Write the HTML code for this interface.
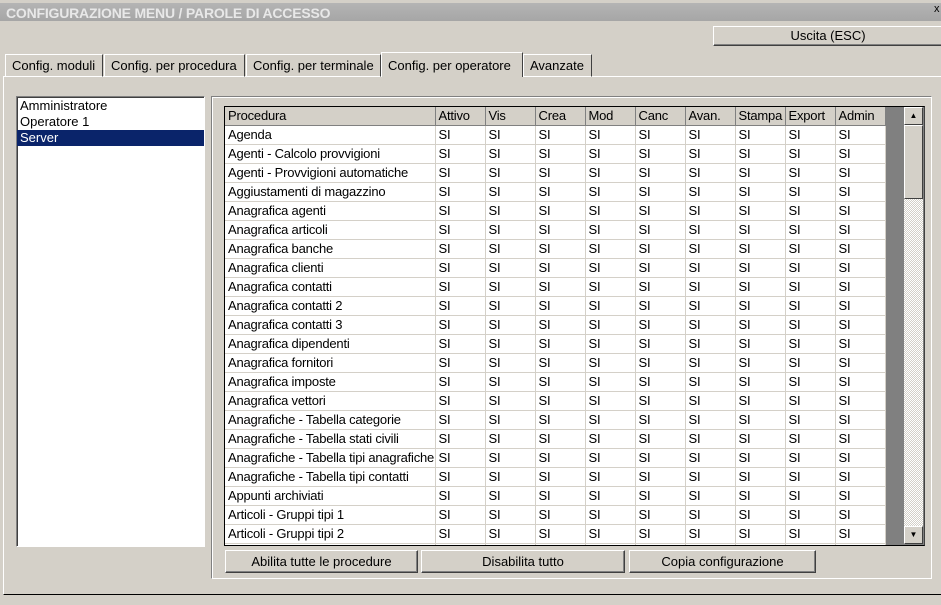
<!DOCTYPE html>
<html><head><meta charset="utf-8"><style>
*{box-sizing:border-box;margin:0;padding:0}
body{width:941px;height:605px;background:#d4d0c8;font-family:"Liberation Sans",Arial,sans-serif;font-size:13px;color:#000;position:relative;overflow:hidden}
.abs{position:absolute}
.title{left:0;top:0;width:941px;height:21px;background:linear-gradient(#b4b4b4,#a6a6a6);border-top:3px solid #d4d0c8;color:#e8e8e8;font-weight:bold;font-size:14px;padding:2px 0 0 6px;letter-spacing:-0.2px}
.btn{background:#d4d0c8;border:1px solid;border-color:#fff #404040 #404040 #fff;box-shadow:inset -1px -1px 0 #808080;text-align:center;line-height:18px}
.tab{top:54px;height:23px;border:1px solid;border-color:#fff #404040 transparent #fff;padding:3px 0 0 6px;white-space:nowrap}
.panel{left:3px;top:76px;width:945px;height:519px;border:1px solid;border-color:#fff #404040 #000 #fff}
.list{left:16px;top:96px;width:189px;height:451px;background:#fff;border:1px solid;border-color:#808080 #fff #fff #808080;box-shadow:inset 1px 1px 0 #404040}
.list div{height:16px;line-height:16px;padding-left:3px}
.frame{left:211px;top:96px;width:721px;height:483px;border:1px solid;border-color:#808080 #fff #fff #808080;box-shadow:inset 1px 1px 0 #fff,1px 1px 0 #808080 inset}
.grid{left:224px;top:106px;width:701px;height:440px;border:1px solid #000;border-right-color:#404040;background:#808080;overflow:hidden}
table{border-collapse:collapse;table-layout:fixed;background:#fff;width:660px}
td{height:19px;border-right:1px solid #d4d0c8;border-bottom:1px solid #d4d0c8;padding:0 0 0 3px;white-space:nowrap;overflow:hidden;text-overflow:clip;line-height:18px;letter-spacing:-0.2px}
tr.h td{background:#d4d0c8;border-right:1px solid #808080;border-bottom:1px solid #808080;height:18px}
.sb{left:904px;top:107px;width:19px;height:437px;background:repeating-conic-gradient(#fff 0 25%,#d4d0c8 0 50%) 0 0/2px 2px}
.ar{position:absolute;left:0;width:19px;height:18px;background:#d4d0c8;border:1px solid;border-color:#fff #404040 #404040 #fff;font-size:8px;text-align:center;line-height:16px}
</style></head><body>
<div class="abs title">CONFIGURAZIONE MENU / PAROLE DI ACCESSO</div>
<div class="abs" style="left:934px;top:3px;font-size:11px;color:#000">x</div>
<div class="abs btn" style="left:713px;top:26px;width:230px;height:20px">Uscita (ESC)</div>
<div class="abs panel"></div>
<div class="abs tab" style="left:5px;width:98px">Config. moduli</div>
<div class="abs tab" style="left:104px;width:141px">Config. per procedura</div>
<div class="abs tab" style="left:246px;width:135px">Config. per terminale</div>
<div class="abs tab" style="left:381px;top:52px;height:25px;width:142px;background:#d4d0c8;border-bottom:none;padding-top:5px">Config. per operatore</div>
<div class="abs tab" style="left:523px;width:69px">Avanzate</div>
<div class="abs list"><div style="margin-top:1px">Amministratore</div><div>Operatore 1</div><div style="background:#0a246a;color:#fff">Server</div></div>
<div class="abs frame"></div>
<div class="abs grid"><table>
<colgroup><col style="width:210px"><col style="width:50px"><col style="width:50px"><col style="width:50px"><col style="width:50px"><col style="width:50px"><col style="width:50px"><col style="width:50px"><col style="width:50px"><col style="width:50px"></colgroup>
<tr class="h"><td>Procedura</td><td>Attivo</td><td>Vis</td><td>Crea</td><td>Mod</td><td>Canc</td><td>Avan.</td><td>Stampa</td><td>Export</td><td>Admin</td></tr>
<tr><td>Agenda</td><td>SI</td><td>SI</td><td>SI</td><td>SI</td><td>SI</td><td>SI</td><td>SI</td><td>SI</td><td>SI</td></tr>
<tr><td>Agenti - Calcolo provvigioni</td><td>SI</td><td>SI</td><td>SI</td><td>SI</td><td>SI</td><td>SI</td><td>SI</td><td>SI</td><td>SI</td></tr>
<tr><td>Agenti - Provvigioni automatiche</td><td>SI</td><td>SI</td><td>SI</td><td>SI</td><td>SI</td><td>SI</td><td>SI</td><td>SI</td><td>SI</td></tr>
<tr><td>Aggiustamenti di magazzino</td><td>SI</td><td>SI</td><td>SI</td><td>SI</td><td>SI</td><td>SI</td><td>SI</td><td>SI</td><td>SI</td></tr>
<tr><td>Anagrafica agenti</td><td>SI</td><td>SI</td><td>SI</td><td>SI</td><td>SI</td><td>SI</td><td>SI</td><td>SI</td><td>SI</td></tr>
<tr><td>Anagrafica articoli</td><td>SI</td><td>SI</td><td>SI</td><td>SI</td><td>SI</td><td>SI</td><td>SI</td><td>SI</td><td>SI</td></tr>
<tr><td>Anagrafica banche</td><td>SI</td><td>SI</td><td>SI</td><td>SI</td><td>SI</td><td>SI</td><td>SI</td><td>SI</td><td>SI</td></tr>
<tr><td>Anagrafica clienti</td><td>SI</td><td>SI</td><td>SI</td><td>SI</td><td>SI</td><td>SI</td><td>SI</td><td>SI</td><td>SI</td></tr>
<tr><td>Anagrafica contatti</td><td>SI</td><td>SI</td><td>SI</td><td>SI</td><td>SI</td><td>SI</td><td>SI</td><td>SI</td><td>SI</td></tr>
<tr><td>Anagrafica contatti 2</td><td>SI</td><td>SI</td><td>SI</td><td>SI</td><td>SI</td><td>SI</td><td>SI</td><td>SI</td><td>SI</td></tr>
<tr><td>Anagrafica contatti 3</td><td>SI</td><td>SI</td><td>SI</td><td>SI</td><td>SI</td><td>SI</td><td>SI</td><td>SI</td><td>SI</td></tr>
<tr><td>Anagrafica dipendenti</td><td>SI</td><td>SI</td><td>SI</td><td>SI</td><td>SI</td><td>SI</td><td>SI</td><td>SI</td><td>SI</td></tr>
<tr><td>Anagrafica fornitori</td><td>SI</td><td>SI</td><td>SI</td><td>SI</td><td>SI</td><td>SI</td><td>SI</td><td>SI</td><td>SI</td></tr>
<tr><td>Anagrafica imposte</td><td>SI</td><td>SI</td><td>SI</td><td>SI</td><td>SI</td><td>SI</td><td>SI</td><td>SI</td><td>SI</td></tr>
<tr><td>Anagrafica vettori</td><td>SI</td><td>SI</td><td>SI</td><td>SI</td><td>SI</td><td>SI</td><td>SI</td><td>SI</td><td>SI</td></tr>
<tr><td>Anagrafiche - Tabella categorie</td><td>SI</td><td>SI</td><td>SI</td><td>SI</td><td>SI</td><td>SI</td><td>SI</td><td>SI</td><td>SI</td></tr>
<tr><td>Anagrafiche - Tabella stati civili</td><td>SI</td><td>SI</td><td>SI</td><td>SI</td><td>SI</td><td>SI</td><td>SI</td><td>SI</td><td>SI</td></tr>
<tr><td>Anagrafiche - Tabella tipi anagrafiche</td><td>SI</td><td>SI</td><td>SI</td><td>SI</td><td>SI</td><td>SI</td><td>SI</td><td>SI</td><td>SI</td></tr>
<tr><td>Anagrafiche - Tabella tipi contatti</td><td>SI</td><td>SI</td><td>SI</td><td>SI</td><td>SI</td><td>SI</td><td>SI</td><td>SI</td><td>SI</td></tr>
<tr><td>Appunti archiviati</td><td>SI</td><td>SI</td><td>SI</td><td>SI</td><td>SI</td><td>SI</td><td>SI</td><td>SI</td><td>SI</td></tr>
<tr><td>Articoli - Gruppi tipi 1</td><td>SI</td><td>SI</td><td>SI</td><td>SI</td><td>SI</td><td>SI</td><td>SI</td><td>SI</td><td>SI</td></tr>
<tr><td>Articoli - Gruppi tipi 2</td><td>SI</td><td>SI</td><td>SI</td><td>SI</td><td>SI</td><td>SI</td><td>SI</td><td>SI</td><td>SI</td></tr>
<tr><td>Articoli - Gruppi tipi 3</td><td>SI</td><td>SI</td><td>SI</td><td>SI</td><td>SI</td><td>SI</td><td>SI</td><td>SI</td><td>SI</td></tr>
</table></div>
<div class="abs sb">
<div class="ar" style="top:0">&#9650;</div>
<div class="ar" style="top:18px;height:74px"></div>
<div class="ar" style="top:419px">&#9660;</div>
</div>
<div class="abs btn" style="left:225px;top:550px;width:193px;height:23px;line-height:21px">Abilita tutte le procedure</div>
<div class="abs btn" style="left:421px;top:550px;width:204px;height:23px;line-height:21px">Disabilita tutto</div>
<div class="abs btn" style="left:629px;top:550px;width:187px;height:23px;line-height:21px">Copia configurazione</div>
</body></html>
